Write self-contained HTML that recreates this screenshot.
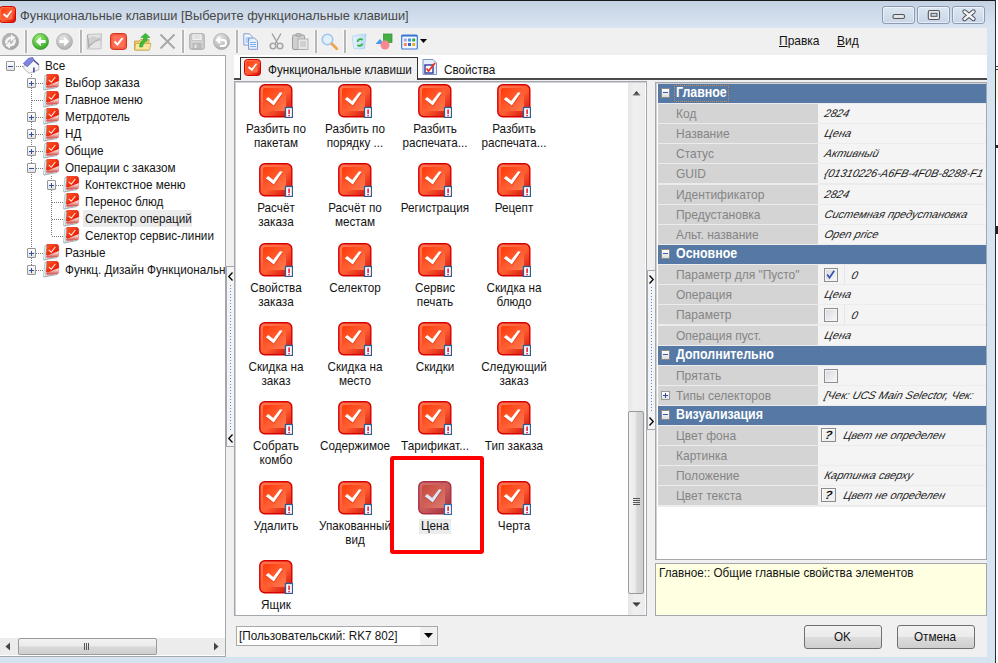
<!DOCTYPE html>
<html><head><meta charset="utf-8">
<style>
*{margin:0;padding:0;box-sizing:border-box}
html,body{width:998px;height:663px;overflow:hidden;background:#fff;font-family:"Liberation Sans",sans-serif;font-size:11.7px;color:#141414}
.a{position:absolute}
.t{position:absolute;white-space:nowrap;line-height:14px}
svg{position:absolute;overflow:visible}
</style></head><body>
<svg width="0" height="0" style="position:absolute">
<defs>
<linearGradient id="gOut" x1="0" y1="0" x2="1" y2="1"><stop offset="0" stop-color="#ff7a55"/><stop offset="0.55" stop-color="#ff5a30"/><stop offset="1" stop-color="#c80808"/></linearGradient>
<linearGradient id="gIn" x1="0" y1="0" x2="1" y2="1"><stop offset="0" stop-color="#ff3a0a"/><stop offset="1" stop-color="#ff7a50"/></linearGradient>
<symbol id="ic32" viewBox="0 0 34 34">
<rect x="0.8" y="0.8" width="32" height="32" rx="5" fill="url(#gOut)" stroke="#d40000" stroke-width="1.4"/>
<rect x="4" y="4" width="23" height="23" rx="2" fill="url(#gIn)"/>
<path d="M6.8 15.2 L9.2 13 L14.2 17 L21 8.2 L23.6 8.8 L14.8 21.6 Z" fill="#a01800" fill-opacity="0.35" transform="translate(0.2,1.2)"/>
<path d="M6.8 15.2 L9.2 13 L14.2 17 L21 8.2 L23.6 8.8 L14.8 21.6 Z" fill="#fff"/>
<rect x="26.5" y="23.5" width="7" height="10" fill="#fff" stroke="#2f5e94" stroke-width="1.3"/>
<rect x="29.3" y="25.5" width="1.6" height="4.6" fill="#e8203a"/>
<rect x="29.3" y="31" width="1.6" height="1.3" fill="#e8203a"/>
</symbol>
<symbol id="tic" viewBox="0 0 17 17">
<linearGradient id="gTr" x1="0" y1="0" x2="1" y2="1"><stop offset="0" stop-color="#ff5a28"/><stop offset="0.6" stop-color="#f22a08"/><stop offset="1" stop-color="#d00000"/></linearGradient>
<linearGradient id="gTb" x1="0" y1="0" x2="0" y2="1"><stop offset="0" stop-color="#fbf2f2"/><stop offset="0.35" stop-color="#f0b8b4"/><stop offset="0.7" stop-color="#d85a58"/><stop offset="1" stop-color="#e8d8d8"/></linearGradient>
<rect x="2.6" y="0.2" width="13" height="11.5" rx="3" fill="url(#gTr)" stroke="#d40000" stroke-width="0.6"/>
<path d="M5.7 5.9 L8.3 8.2 L12.3 3" fill="none" stroke="#fff" stroke-opacity="0.85" stroke-width="1.2"/>
<path d="M2.8 12.2 L15.8 7 L15.8 12.4 L4 15.2 Z" fill="url(#gTb)"/>
<path d="M1 16 L14.5 13.4" stroke="#9fb2b6" stroke-width="1"/>
<path d="M0.4 15.8 L1.9 1.8 L3.6 1.4 L2.4 15.6 Z" fill="#e2f8fc" stroke="#93a8ac" stroke-width="0.6"/>
</symbol>
<linearGradient id="gOutS" x1="0" y1="0" x2="1" y2="1"><stop offset="0" stop-color="#d27070"/><stop offset="0.55" stop-color="#c85858"/><stop offset="1" stop-color="#a02838"/></linearGradient>
<linearGradient id="gInS" x1="0" y1="0" x2="1" y2="1"><stop offset="0" stop-color="#c84838"/><stop offset="1" stop-color="#da7a70"/></linearGradient>
<symbol id="ic32s" viewBox="0 0 34 34">
<rect x="0.8" y="0.8" width="32" height="32" rx="5" fill="url(#gOutS)" stroke="#a83040" stroke-width="1.4"/>
<rect x="4" y="4" width="23" height="23" rx="2" fill="url(#gInS)"/>
<path d="M6.8 15.2 L9.2 13 L14.2 17 L21 8.2 L23.6 8.8 L14.8 21.6 Z" fill="#803040" fill-opacity="0.35" transform="translate(0.2,1.2)"/>
<path d="M6.8 15.2 L9.2 13 L14.2 17 L21 8.2 L23.6 8.8 L14.8 21.6 Z" fill="#dde8fa"/>
<rect x="26.5" y="23.5" width="7" height="10" fill="#fff" stroke="#2f6ab0" stroke-width="1.3"/>
<rect x="29.3" y="25.5" width="1.6" height="4.6" fill="#e8203a"/>
<rect x="29.3" y="31" width="1.6" height="1.3" fill="#e8203a"/>
</symbol>
<symbol id="ic32nb" viewBox="0 0 34 34">
<rect x="1" y="1" width="32" height="32" rx="6" fill="url(#gOut)" stroke="#d40000" stroke-width="2"/>
<rect x="4.5" y="4.5" width="22.5" height="22.5" rx="3" fill="url(#gIn)"/>
<path d="M7.5 17.5 L10.5 14.5 L15.5 19 L23.5 9 L26.5 10.2 L16.2 24.5 Z" fill="#a01800" fill-opacity="0.35" transform="translate(0.2,1.2)"/>
<path d="M7.5 17.5 L10.5 14.5 L15.5 19 L23.5 9 L26.5 10.2 L16.2 24.5 Z" fill="#fff"/>
</symbol>
</defs>
</svg>

<!-- top black line -->
<div class="a" style="left:0;top:0;width:998px;height:1px;background:#1a1a1a"></div>
<!-- window frame -->
<div class="a" style="left:0;top:1px;width:995px;height:662px;background:#d6e3f1"></div>
<div class="a" style="left:0;top:1px;width:995px;height:27px;background:linear-gradient(#c3d2e3,#dae5f2)"></div>
<div class="a" style="left:995px;top:0;width:1px;height:663px;background:#2b2b2b"></div>
<div class="a" style="left:996px;top:0;width:2px;height:663px;background:#fff"></div>
<div class="a" style="left:996px;top:66px;width:2px;height:1px;background:#333"></div>
<div class="a" style="left:996px;top:69px;width:2px;height:31px;background:#fffbe0;border-top:1px solid #333"></div>
<div class="a" style="left:996px;top:145px;width:2px;height:3px;background:#222"></div>
<div class="a" style="left:996px;top:226px;width:2px;height:8px;background:#222"></div>

<!-- title icon -->
<svg class="a" style="left:-1px;top:6px" width="17" height="17"><use href="#ic32nb"/></svg>
<div class="t" style="left:20px;top:9px;font-size:12.8px;color:#484848">Функциональные клавиши [Выберите функциональные клавиши]</div>

<!-- caption buttons -->
<div class="a" style="left:882px;top:6px;width:33px;height:18px;border:1px solid #8b9bb5;border-radius:3px;box-shadow:inset 0 0 0 1px rgba(255,255,255,0.55);background:linear-gradient(#dde7f2,#c9d6e6)"></div>
<div class="a" style="left:917px;top:6px;width:33px;height:18px;border:1px solid #8b9bb5;border-radius:3px;box-shadow:inset 0 0 0 1px rgba(255,255,255,0.55);background:linear-gradient(#dde7f2,#c9d6e6)"></div>
<div class="a" style="left:952px;top:6px;width:33px;height:18px;border:1px solid #8b9bb5;border-radius:3px;box-shadow:inset 0 0 0 1px rgba(255,255,255,0.55);background:linear-gradient(#dde7f2,#c9d6e6)"></div>
<svg class="a" style="left:892px;top:13px" width="14" height="7" viewBox="0 0 14 7"><rect x="1" y="1.5" width="11.5" height="4" rx="1.5" fill="#e4e4e4" stroke="#505560" stroke-width="1.1"/></svg>
<svg class="a" style="left:927px;top:9px" width="14" height="12" viewBox="0 0 14 12"><rect x="1.3" y="1.5" width="11.2" height="9" rx="1.5" fill="#ececec" stroke="#505560" stroke-width="1.1"/><rect x="4" y="4.3" width="6" height="3" fill="#c8d4e4" stroke="#505560" stroke-width="1"/></svg>
<svg class="a" style="left:961px;top:9px" width="16" height="12" viewBox="0 0 16 12"><path d="M3.5 2.5 L12.5 10 M12.5 2.5 L3.5 10" stroke="#4a505c" stroke-width="4.4" stroke-linecap="round"/><path d="M3.5 2.5 L12.5 10 M12.5 2.5 L3.5 10" stroke="#f4f4f4" stroke-width="2.4" stroke-linecap="round"/></svg>

<!-- client area -->
<div class="a" style="left:0;top:28px;width:987px;height:629px;background:#f0f0f0"></div>

<!-- TOOLBAR placeholder -->

<!-- separators -->
<div class="a" style="left:25px;top:30px;width:2px;height:23px;background:#b6b6b6;box-shadow:1px 0 0 #fafafa,-1px 0 0 #fafafa"></div>
<div class="a" style="left:80px;top:30px;width:2px;height:23px;background:#b6b6b6;box-shadow:1px 0 0 #fafafa,-1px 0 0 #fafafa"></div>
<div class="a" style="left:182px;top:30px;width:2px;height:23px;background:#b6b6b6;box-shadow:1px 0 0 #fafafa,-1px 0 0 #fafafa"></div>
<div class="a" style="left:236px;top:30px;width:2px;height:23px;background:#b6b6b6;box-shadow:1px 0 0 #fafafa,-1px 0 0 #fafafa"></div>
<div class="a" style="left:315px;top:30px;width:2px;height:23px;background:#b6b6b6;box-shadow:1px 0 0 #fafafa,-1px 0 0 #fafafa"></div>
<div class="a" style="left:344px;top:30px;width:2px;height:23px;background:#b6b6b6;box-shadow:1px 0 0 #fafafa,-1px 0 0 #fafafa"></div>
<!-- refresh -->
<svg class="a" style="left:2px;top:33px" width="17" height="17" viewBox="0 0 17 17">
<defs><radialGradient id="gRf" cx="0.45" cy="0.4" r="0.7"><stop offset="0" stop-color="#c4c4c4"/><stop offset="1" stop-color="#9e9e9e"/></radialGradient></defs>
<circle cx="8.5" cy="8.5" r="8.2" fill="url(#gRf)" stroke="#a4a4a4" stroke-width="0.6"/>
<path d="M4.3 10.5 Q3.8 5.2 9.5 4.6" fill="none" stroke="#f6f6f6" stroke-width="2.4"/>
<path d="M9 1.3 L13.6 4.8 L9 8.6 Z" fill="#f6f6f6"/>
<path d="M12.7 6.5 Q13.2 11.8 7.5 12.4" fill="none" stroke="#f6f6f6" stroke-width="2.4"/>
<path d="M8 8.4 L3.4 12.2 L8 15.7 Z" fill="#f6f6f6"/>
</svg>
<!-- back green -->
<svg class="a" style="left:32px;top:33px" width="17" height="17" viewBox="0 0 17 17">
<defs><radialGradient id="gGr" cx="0.4" cy="0.3" r="0.8"><stop offset="0" stop-color="#9ef07a"/><stop offset="1" stop-color="#2a9a20"/></radialGradient>
<radialGradient id="gGy" cx="0.4" cy="0.3" r="0.8"><stop offset="0" stop-color="#e6e6e6"/><stop offset="1" stop-color="#a8a8a8"/></radialGradient></defs>
<circle cx="8.5" cy="8.5" r="8" fill="url(#gGr)" stroke="#3a9a30" stroke-width="0.7"/>
<path d="M3.8 8.5 L8.8 3.8 L8.8 6.9 L13.6 6.9 L13.6 10.1 L8.8 10.1 L8.8 13.2 Z" fill="#fff"/>
</svg>
<!-- forward gray -->
<svg class="a" style="left:56px;top:33px" width="17" height="17" viewBox="0 0 17 17">
<circle cx="8.5" cy="8.5" r="8" fill="url(#gGy)" stroke="#a4a7ac" stroke-width="0.7"/>
<path d="M13.2 8.5 L8.2 3.8 L8.2 6.9 L3.4 6.9 L3.4 10.1 L8.2 10.1 L8.2 13.2 Z" fill="#fff"/>
</svg>
<!-- gray picture -->
<svg class="a" style="left:86px;top:33px" width="17" height="17" viewBox="0 0 17 17">
<path d="M1.5 1.5 L15.5 0.8 L15 15.8 L1 16 Z" fill="#e4e4e4" stroke="#bdbdbd" stroke-width="0.9"/>
<path d="M2 6 Q6 2 10 4 T15 2 V9 Q10 6 6 11 T2 15 Z" fill="#cfcfcf"/>
<path d="M3 13 Q8 8 14 6" fill="none" stroke="#b0b0b0" stroke-width="1.2"/>
<path d="M1.5 2 L3 15" stroke="#a8a8a8" stroke-width="1.2"/>
</svg>
<!-- red check -->
<svg class="a" style="left:110px;top:33px" width="17" height="17" viewBox="0 0 17 17">
<rect x="0.5" y="0.5" width="16" height="16" rx="3" fill="#f45a40" stroke="#d83020"/>
<rect x="2.5" y="2.5" width="12" height="12" rx="1.5" fill="#ff7058"/>
<path d="M4.5 8.5 L7.5 11.5 L12.5 5" fill="none" stroke="#fff" stroke-width="2"/>
</svg>
<!-- folder green arrow -->
<svg class="a" style="left:134px;top:33px" width="18" height="18" viewBox="0 0 18 18">
<path d="M0.5 8 H5.5 L6.5 6.5 H15 V17 H0.5 Z" fill="#f0cc6a" stroke="#c09a40" stroke-width="0.8"/>
<path d="M1.5 10.5 H17 L15.5 17 H0.8 Z" fill="#fbe6a0" stroke="#c8a448" stroke-width="0.8"/>
<path d="M5.5 14 Q5.5 8.5 9.5 7 L9.5 4.5 L6.8 4.5 L11.5 0.3 L16 4.5 L13 4.5 L13 8 Q9 9 8.5 14 Z" fill="#3cba3a" stroke="#229a22" stroke-width="0.5"/>
</svg>
<!-- X -->
<svg class="a" style="left:159px;top:33px" width="17" height="17" viewBox="0 0 17 17">
<path d="M1.5 1.5 L15.5 15.5 M15.5 1.5 L1.5 15.5" stroke="#a6a6a6" stroke-width="1.8"/>
</svg>
<!-- floppy -->
<svg class="a" style="left:189px;top:33px" width="16" height="17" viewBox="0 0 16 17">
<rect x="0.8" y="0.8" width="14.4" height="15.4" rx="1.5" fill="#d2d2d2" stroke="#a4a4a4"/>
<rect x="3" y="1" width="10" height="6.5" fill="#f4f4f4" stroke="#b4b4b4" stroke-width="0.6"/>
<path d="M4.5 3 H11.5 M4.5 5 H11.5" stroke="#c4c4c4" stroke-width="0.8"/>
<rect x="4" y="10.5" width="8" height="5.5" fill="#bdbdbd" stroke="#a8a8a8" stroke-width="0.5"/>
<rect x="5.5" y="11.5" width="2" height="3.5" fill="#e8e8e8"/>
</svg>
<!-- undo gray -->
<svg class="a" style="left:213px;top:33px" width="17" height="17" viewBox="0 0 17 17">
<circle cx="8.5" cy="8.5" r="8" fill="url(#gGy)" stroke="#a4a7ac" stroke-width="0.7"/>
<path d="M5 7 H10 A3 3 0 0 1 10 13 H7" fill="none" stroke="#fff" stroke-width="2"/>
<path d="M7 4 L4 7 L7 10" fill="none" stroke="#fff" stroke-width="2"/>
</svg>
<!-- copy -->
<svg class="a" style="left:243px;top:33px" width="17" height="17" viewBox="0 0 17 17">
<path d="M0.8 0.8 H6.5 L9 3.3 V12 H0.8 Z" fill="#f0f6fe" stroke="#7c90d0" stroke-width="0.9"/>
<path d="M5.5 5 H11.5 L14.5 8 V16.3 H5.5 Z" fill="#e8f0fc" stroke="#7c90d0" stroke-width="0.9"/>
<path d="M2.5 5 H7 M2.5 7 H7 M2.5 9 H5" stroke="#60a0e8" stroke-width="0.8"/>
<path d="M7 9.5 H13 M7 11.5 H13 M7 13.5 H13" stroke="#60a0e8" stroke-width="0.8"/>
</svg>
<!-- scissors -->
<svg class="a" style="left:269px;top:33px" width="15" height="17" viewBox="0 0 15 17">
<path d="M3 0.5 L9 11 M12 0.5 L6 11" stroke="#9c9c9c" stroke-width="1.3"/>
<circle cx="4" cy="13" r="2.8" fill="none" stroke="#a6a6a6" stroke-width="1.6"/>
<circle cx="11" cy="13" r="2.8" fill="none" stroke="#a6a6a6" stroke-width="1.6"/>
</svg>
<!-- paste -->
<svg class="a" style="left:292px;top:33px" width="17" height="17" viewBox="0 0 17 17">
<rect x="0.5" y="2" width="12" height="14.5" rx="1.5" fill="#cfcfcf" stroke="#9c9c9c"/>
<rect x="4" y="0.5" width="5" height="3" rx="1" fill="#bbb" stroke="#999" stroke-width="0.6"/>
<rect x="6" y="6" width="10" height="10.5" fill="#e6e6e6" stroke="#a4a7ac" stroke-width="0.8"/>
<path d="M8 9 H14 M8 11 H14 M8 13 H14" stroke="#b0b0b0" stroke-width="0.8"/>
</svg>
<!-- magnifier -->
<svg class="a" style="left:321px;top:33px" width="17" height="17" viewBox="0 0 17 17">
<circle cx="6.5" cy="6.5" r="5.3" fill="#dff0fc" stroke="#9cc4ec" stroke-width="1.5"/>
<path d="M10.8 10.8 L15.8 15.8" stroke="#e8a850" stroke-width="2.8" stroke-linecap="round"/>
</svg>
<!-- bin -->
<svg class="a" style="left:351px;top:33px" width="16" height="17" viewBox="0 0 16 17">
<defs><linearGradient id="gBin" x1="0" y1="0" x2="1" y2="0"><stop offset="0" stop-color="#e8f4fc"/><stop offset="1" stop-color="#b8dcf4"/></linearGradient></defs>
<path d="M1 3.5 Q7 1.5 15 1 L13.5 15.5 Q8 16.5 3 15.5 Z" fill="url(#gBin)" stroke="#a8d0ec" stroke-width="0.7"/>
<path d="M6.5 9 A3 3 0 0 1 11.5 7 M11.5 10.5 A3 3 0 0 1 6.5 12" fill="none" stroke="#38b040" stroke-width="1.8"/>
</svg>
<!-- shapes -->
<svg class="a" style="left:375px;top:33px" width="18" height="17" viewBox="0 0 18 17">
<rect x="8.5" y="1" width="8.5" height="8.5" fill="#44b044" stroke="#2a902a" stroke-width="0.7"/>
<path d="M0.5 11 L5 6 L9.5 11 Z" fill="#4898e8"/>
<circle cx="10" cy="12" r="4.5" fill="#f88890"/>
</svg>
<!-- grid -->
<svg class="a" style="left:401px;top:34px" width="17" height="16" viewBox="0 0 17 16">
<rect x="0.7" y="1" width="15.6" height="14" rx="1" fill="#f6f9ff" stroke="#3a78d8" stroke-width="1.2"/>
<rect x="0.7" y="1" width="15.6" height="1.6" fill="#3a78d8"/>
<rect x="2.8" y="4.5" width="3" height="3" fill="#a8a8e0"/><rect x="7" y="4.5" width="3" height="3" fill="#3a98e8"/><rect x="11.2" y="4.5" width="3" height="3" fill="#38a838"/>
<rect x="2.8" y="9" width="3" height="3" fill="#f88858"/><rect x="7" y="9" width="3" height="3" fill="#4060c0"/><rect x="11.2" y="9" width="3" height="3" fill="#e0b030"/>
</svg>
<svg class="a" style="left:420px;top:39px" width="7" height="4" viewBox="0 0 7 4"><path d="M0 0 H7 L3.5 4 Z" fill="#000"/></svg>


<!-- menu -->
<div class="t" style="left:779px;top:34.00px;font-size:13.33px;transform:scaleX(0.9001);transform-origin:0 0"><u>П</u>равка</div>
<div class="t" style="left:837px;top:34.00px;font-size:13.33px;transform:scaleX(0.9001);transform-origin:0 0"><u>В</u>ид</div>

<!-- TREE -->
<div class="a" style="left:-1px;top:55px;width:227px;height:602px;border:1px solid #a4a7ac;background:#fff"></div>
<div class="a" style="left:0;top:56px;width:225px;height:582px;overflow:hidden"><div class="a" style="left:0;top:-56px;width:225px;height:700px"><div class="a" style="left:16px;top:66px;width:7px;height:1px;background:repeating-linear-gradient(90deg,#7a7a7a 0 1px,transparent 1px 2px)"></div>
<div class="a" style="left:31px;top:74px;width:1px;height:196px;background:repeating-linear-gradient(180deg,#7a7a7a 0 1px,transparent 1px 2px)"></div>
<div class="a" style="left:36px;top:83px;width:7px;height:1px;background:repeating-linear-gradient(90deg,#7a7a7a 0 1px,transparent 1px 2px)"></div>
<div class="a" style="left:32px;top:100px;width:11px;height:1px;background:repeating-linear-gradient(90deg,#7a7a7a 0 1px,transparent 1px 2px)"></div>
<div class="a" style="left:36px;top:117px;width:7px;height:1px;background:repeating-linear-gradient(90deg,#7a7a7a 0 1px,transparent 1px 2px)"></div>
<div class="a" style="left:36px;top:134px;width:7px;height:1px;background:repeating-linear-gradient(90deg,#7a7a7a 0 1px,transparent 1px 2px)"></div>
<div class="a" style="left:36px;top:151px;width:7px;height:1px;background:repeating-linear-gradient(90deg,#7a7a7a 0 1px,transparent 1px 2px)"></div>
<div class="a" style="left:36px;top:168px;width:7px;height:1px;background:repeating-linear-gradient(90deg,#7a7a7a 0 1px,transparent 1px 2px)"></div>
<div class="a" style="left:56px;top:185px;width:7px;height:1px;background:repeating-linear-gradient(90deg,#7a7a7a 0 1px,transparent 1px 2px)"></div>
<div class="a" style="left:52px;top:202px;width:11px;height:1px;background:repeating-linear-gradient(90deg,#7a7a7a 0 1px,transparent 1px 2px)"></div>
<div class="a" style="left:52px;top:219px;width:11px;height:1px;background:repeating-linear-gradient(90deg,#7a7a7a 0 1px,transparent 1px 2px)"></div>
<div class="a" style="left:52px;top:236px;width:11px;height:1px;background:repeating-linear-gradient(90deg,#7a7a7a 0 1px,transparent 1px 2px)"></div>
<div class="a" style="left:36px;top:253px;width:7px;height:1px;background:repeating-linear-gradient(90deg,#7a7a7a 0 1px,transparent 1px 2px)"></div>
<div class="a" style="left:36px;top:270px;width:7px;height:1px;background:repeating-linear-gradient(90deg,#7a7a7a 0 1px,transparent 1px 2px)"></div>
<div class="a" style="left:51px;top:176px;width:1px;height:60px;background:repeating-linear-gradient(180deg,#7a7a7a 0 1px,transparent 1px 2px)"></div><div class="a" style="left:6px;top:61px;width:9px;height:10px;border:1px solid #959595;border-radius:1px;background:linear-gradient(#fff,#e2e2e2)"></div>
<div class="a" style="left:8px;top:66px;width:5px;height:1px;background:#3050a8"></div>
<svg class="a" style="left:23px;top:57px" width="17" height="17" viewBox="0 0 17 17"><path d="M0.8 8.5 L0.8 11.5 L6 16.3 L15.8 12.8 L15.8 7.5 L10.5 3 Z" fill="#f6f6f6" stroke="#a8a8a8" stroke-width="0.8"/><path d="M10.5 3 L15.8 7.8" stroke="#3c4090" stroke-width="1.2"/><path d="M0.3 6.5 L5.5 1.2 L9.8 0.6 L11 3.2 L4.2 9.8 Z" fill="#7e84e0" stroke="#5a5eb0" stroke-width="0.7"/><rect x="10" y="10.5" width="1.8" height="5" fill="#5558a8"/></svg>
<div class="t" style="left:45px;top:58.50px;font-size:13.0px;transform:scaleX(0.9001);transform-origin:0 0">Все</div>
<div class="a" style="left:27px;top:78px;width:9px;height:10px;border:1px solid #959595;border-radius:1px;background:linear-gradient(#fff,#e2e2e2)"></div>
<div class="a" style="left:29px;top:83px;width:5px;height:1px;background:#3050a8"></div>
<div class="a" style="left:31px;top:81px;width:1px;height:5px;background:#3050a8"></div>
<svg class="a" style="left:43px;top:74px" width="17" height="17"><use href="#tic"/></svg>
<div class="t" style="left:65px;top:75.50px;font-size:13.0px;transform:scaleX(0.9001);transform-origin:0 0">Выбор заказа</div>
<svg class="a" style="left:43px;top:91px" width="17" height="17"><use href="#tic"/></svg>
<div class="t" style="left:65px;top:92.50px;font-size:13.0px;transform:scaleX(0.9001);transform-origin:0 0">Главное меню</div>
<div class="a" style="left:27px;top:112px;width:9px;height:10px;border:1px solid #959595;border-radius:1px;background:linear-gradient(#fff,#e2e2e2)"></div>
<div class="a" style="left:29px;top:117px;width:5px;height:1px;background:#3050a8"></div>
<div class="a" style="left:31px;top:115px;width:1px;height:5px;background:#3050a8"></div>
<svg class="a" style="left:43px;top:108px" width="17" height="17"><use href="#tic"/></svg>
<div class="t" style="left:65px;top:109.50px;font-size:13.0px;transform:scaleX(0.9001);transform-origin:0 0">Метрдотель</div>
<div class="a" style="left:27px;top:129px;width:9px;height:10px;border:1px solid #959595;border-radius:1px;background:linear-gradient(#fff,#e2e2e2)"></div>
<div class="a" style="left:29px;top:134px;width:5px;height:1px;background:#3050a8"></div>
<div class="a" style="left:31px;top:132px;width:1px;height:5px;background:#3050a8"></div>
<svg class="a" style="left:43px;top:125px" width="17" height="17"><use href="#tic"/></svg>
<div class="t" style="left:65px;top:126.50px;font-size:13.0px;transform:scaleX(0.9001);transform-origin:0 0">НД</div>
<div class="a" style="left:27px;top:146px;width:9px;height:10px;border:1px solid #959595;border-radius:1px;background:linear-gradient(#fff,#e2e2e2)"></div>
<div class="a" style="left:29px;top:151px;width:5px;height:1px;background:#3050a8"></div>
<div class="a" style="left:31px;top:149px;width:1px;height:5px;background:#3050a8"></div>
<svg class="a" style="left:43px;top:142px" width="17" height="17"><use href="#tic"/></svg>
<div class="t" style="left:65px;top:143.50px;font-size:13.0px;transform:scaleX(0.9001);transform-origin:0 0">Общие</div>
<div class="a" style="left:27px;top:163px;width:9px;height:10px;border:1px solid #959595;border-radius:1px;background:linear-gradient(#fff,#e2e2e2)"></div>
<div class="a" style="left:29px;top:168px;width:5px;height:1px;background:#3050a8"></div>
<svg class="a" style="left:43px;top:159px" width="17" height="17"><use href="#tic"/></svg>
<div class="t" style="left:65px;top:160.50px;font-size:13.0px;transform:scaleX(0.9001);transform-origin:0 0">Операции с заказом</div>
<div class="a" style="left:47px;top:180px;width:9px;height:10px;border:1px solid #959595;border-radius:1px;background:linear-gradient(#fff,#e2e2e2)"></div>
<div class="a" style="left:49px;top:185px;width:5px;height:1px;background:#3050a8"></div>
<div class="a" style="left:51px;top:183px;width:1px;height:5px;background:#3050a8"></div>
<svg class="a" style="left:63px;top:176px" width="17" height="17"><use href="#tic"/></svg>
<div class="t" style="left:85px;top:177.50px;font-size:13.0px;transform:scaleX(0.9001);transform-origin:0 0">Контекстное меню</div>
<svg class="a" style="left:63px;top:193px" width="17" height="17"><use href="#tic"/></svg>
<div class="t" style="left:85px;top:194.50px;font-size:13.0px;transform:scaleX(0.9001);transform-origin:0 0">Перенос блюд</div>
<div class="a" style="left:83px;top:210px;width:109px;height:17px;background:#ebebeb"></div>
<svg class="a" style="left:63px;top:210px" width="17" height="17"><use href="#tic"/></svg>
<div class="t" style="left:85px;top:211.50px;font-size:13.0px;transform:scaleX(0.9001);transform-origin:0 0">Селектор операций</div>
<svg class="a" style="left:63px;top:227px" width="17" height="17"><use href="#tic"/></svg>
<div class="t" style="left:85px;top:228.50px;font-size:13.0px;transform:scaleX(0.9001);transform-origin:0 0">Селектор сервис-линии</div>
<div class="a" style="left:27px;top:248px;width:9px;height:10px;border:1px solid #959595;border-radius:1px;background:linear-gradient(#fff,#e2e2e2)"></div>
<div class="a" style="left:29px;top:253px;width:5px;height:1px;background:#3050a8"></div>
<div class="a" style="left:31px;top:251px;width:1px;height:5px;background:#3050a8"></div>
<svg class="a" style="left:43px;top:244px" width="17" height="17"><use href="#tic"/></svg>
<div class="t" style="left:65px;top:245.50px;font-size:13.0px;transform:scaleX(0.9001);transform-origin:0 0">Разные</div>
<div class="a" style="left:27px;top:265px;width:9px;height:10px;border:1px solid #959595;border-radius:1px;background:linear-gradient(#fff,#e2e2e2)"></div>
<div class="a" style="left:29px;top:270px;width:5px;height:1px;background:#3050a8"></div>
<div class="a" style="left:31px;top:268px;width:1px;height:5px;background:#3050a8"></div>
<svg class="a" style="left:43px;top:261px" width="17" height="17"><use href="#tic"/></svg>
<div class="t" style="left:65px;top:262.50px;font-size:13.0px;transform:scaleX(0.9001);transform-origin:0 0">Функц. Дизайн Функциональные</div></div></div>

<!-- tree hscroll -->
<div class="a" style="left:0;top:638px;width:225px;height:17px;background:#ececec"></div>
<svg class="a" style="left:5px;top:642px" width="6" height="9" viewBox="0 0 6 9"><path d="M5 0.5 L0.5 4.5 L5 8.5 Z" fill="#444"/></svg>
<svg class="a" style="left:213px;top:642px" width="6" height="9" viewBox="0 0 6 9"><path d="M1 0.5 L5.5 4.5 L1 8.5 Z" fill="#444"/></svg>
<div class="a" style="left:18px;top:638px;width:139px;height:17px;border:1px solid #9a9a9a;border-radius:2px;background:linear-gradient(#f2f2f2 0,#ebebeb 45%,#d8d8d8 55%,#cfcfcf 100%)"></div>
<div class="a" style="left:84px;top:643px;width:1px;height:7px;background:#555"></div>
<div class="a" style="left:86px;top:643px;width:1px;height:7px;background:#555"></div>
<div class="a" style="left:88px;top:643px;width:1px;height:7px;background:#555"></div>

<!-- left splitter -->
<div class="a" style="left:226px;top:266px;width:9px;height:181px;border:1px solid #a4a7ac;background:#f4f4f4"></div>
<svg class="a" style="left:228px;top:272px" width="5" height="9" viewBox="0 0 5 9"><path d="M4.5 0.5 L0.8 4.5 L4.5 8.5" fill="none" stroke="#000" stroke-width="1.3"/></svg>
<svg class="a" style="left:228px;top:434px" width="5" height="9" viewBox="0 0 5 9"><path d="M4.5 0.5 L0.8 4.5 L4.5 8.5" fill="none" stroke="#000" stroke-width="1.3"/></svg>
<div class="a" style="left:230px;top:285px;width:1px;height:146px;background:repeating-linear-gradient(180deg,#3a8af0 0 1px,transparent 1px 3px)"></div>

<!-- tab strip -->
<div class="a" style="left:234px;top:55px;width:753px;height:25px;background:#fff"></div>
<div class="a" style="left:234px;top:78px;width:6px;height:2px;background:#4a4a4a"></div>
<div class="a" style="left:417px;top:78px;width:570px;height:2px;background:#4a4a4a"></div>
<div class="a" style="left:240px;top:57px;width:178px;height:23px;border:1px solid #333;border-bottom:none;background:#f0f0f0"></div>
<svg class="a" style="left:244px;top:59px" width="17" height="17"><use href="#ic32nb"/></svg>
<div class="t" style="left:268px;top:63.00px;font-size:13.0px;transform:scaleX(0.9001);transform-origin:0 0">Функциональные клавиши</div>
<svg class="a" style="left:422px;top:59px" width="15" height="16" viewBox="0 0 15 16">
<path d="M1 .5 H11 L14.5 4 V15.5 H1 Z" fill="#e6eefa" stroke="#7b8fc8"/>
<rect x="3" y="6" width="8" height="8" fill="#fff" stroke="#2a3a9a" stroke-width="1.4"/>
<path d="M4.5 9.5 L6.5 12 L13 4" fill="none" stroke="#f03020" stroke-width="1.8"/>
</svg>
<div class="t" style="left:444px;top:63.00px;font-size:13.0px;transform:scaleX(0.9001);transform-origin:0 0">Свойства</div>

<!-- icon panel -->
<div class="a" style="left:234px;top:81px;width:413px;height:535px;border:1px solid #a4a7ac;box-shadow:inset 1px 1px 0 #d0d2d6;background:#fff"></div>
<svg class="a" style="left:259px;top:84px" width="34" height="34"><use href="#ic32"/></svg>
<div class="t" style="left:235.5px;width:80px;text-align:center;top:122.00px;font-size:13.0px;transform:scaleX(0.9001);transform-origin:50% 0">Разбить по</div>
<div class="t" style="left:235.5px;width:80px;text-align:center;top:135.70px;font-size:13.0px;transform:scaleX(0.9001);transform-origin:50% 0">пакетам</div>
<svg class="a" style="left:338px;top:84px" width="34" height="34"><use href="#ic32"/></svg>
<div class="t" style="left:314.5px;width:80px;text-align:center;top:122.00px;font-size:13.0px;transform:scaleX(0.9001);transform-origin:50% 0">Разбить по</div>
<div class="t" style="left:314.5px;width:80px;text-align:center;top:135.70px;font-size:13.0px;transform:scaleX(0.9001);transform-origin:50% 0">порядку ...</div>
<svg class="a" style="left:418px;top:84px" width="34" height="34"><use href="#ic32"/></svg>
<div class="t" style="left:394.5px;width:80px;text-align:center;top:122.00px;font-size:13.0px;transform:scaleX(0.9001);transform-origin:50% 0">Разбить</div>
<div class="t" style="left:394.5px;width:80px;text-align:center;top:135.70px;font-size:13.0px;transform:scaleX(0.9001);transform-origin:50% 0">распечата...</div>
<svg class="a" style="left:497px;top:84px" width="34" height="34"><use href="#ic32"/></svg>
<div class="t" style="left:473.5px;width:80px;text-align:center;top:122.00px;font-size:13.0px;transform:scaleX(0.9001);transform-origin:50% 0">Разбить</div>
<div class="t" style="left:473.5px;width:80px;text-align:center;top:135.70px;font-size:13.0px;transform:scaleX(0.9001);transform-origin:50% 0">распечата...</div>
<svg class="a" style="left:259px;top:163px" width="34" height="34"><use href="#ic32"/></svg>
<div class="t" style="left:235.5px;width:80px;text-align:center;top:201.00px;font-size:13.0px;transform:scaleX(0.9001);transform-origin:50% 0">Расчёт</div>
<div class="t" style="left:235.5px;width:80px;text-align:center;top:214.70px;font-size:13.0px;transform:scaleX(0.9001);transform-origin:50% 0">заказа</div>
<svg class="a" style="left:338px;top:163px" width="34" height="34"><use href="#ic32"/></svg>
<div class="t" style="left:314.5px;width:80px;text-align:center;top:201.00px;font-size:13.0px;transform:scaleX(0.9001);transform-origin:50% 0">Расчёт по</div>
<div class="t" style="left:314.5px;width:80px;text-align:center;top:214.70px;font-size:13.0px;transform:scaleX(0.9001);transform-origin:50% 0">местам</div>
<svg class="a" style="left:418px;top:163px" width="34" height="34"><use href="#ic32"/></svg>
<div class="t" style="left:394.5px;width:80px;text-align:center;top:201.00px;font-size:13.0px;transform:scaleX(0.9001);transform-origin:50% 0">Регистрация</div>
<svg class="a" style="left:497px;top:163px" width="34" height="34"><use href="#ic32"/></svg>
<div class="t" style="left:473.5px;width:80px;text-align:center;top:201.00px;font-size:13.0px;transform:scaleX(0.9001);transform-origin:50% 0">Рецепт</div>
<svg class="a" style="left:259px;top:243px" width="34" height="34"><use href="#ic32"/></svg>
<div class="t" style="left:235.5px;width:80px;text-align:center;top:281.00px;font-size:13.0px;transform:scaleX(0.9001);transform-origin:50% 0">Свойства</div>
<div class="t" style="left:235.5px;width:80px;text-align:center;top:294.70px;font-size:13.0px;transform:scaleX(0.9001);transform-origin:50% 0">заказа</div>
<svg class="a" style="left:338px;top:243px" width="34" height="34"><use href="#ic32"/></svg>
<div class="t" style="left:314.5px;width:80px;text-align:center;top:281.00px;font-size:13.0px;transform:scaleX(0.9001);transform-origin:50% 0">Селектор</div>
<svg class="a" style="left:418px;top:243px" width="34" height="34"><use href="#ic32"/></svg>
<div class="t" style="left:394.5px;width:80px;text-align:center;top:281.00px;font-size:13.0px;transform:scaleX(0.9001);transform-origin:50% 0">Сервис</div>
<div class="t" style="left:394.5px;width:80px;text-align:center;top:294.70px;font-size:13.0px;transform:scaleX(0.9001);transform-origin:50% 0">печать</div>
<svg class="a" style="left:497px;top:243px" width="34" height="34"><use href="#ic32"/></svg>
<div class="t" style="left:473.5px;width:80px;text-align:center;top:281.00px;font-size:13.0px;transform:scaleX(0.9001);transform-origin:50% 0">Скидка на</div>
<div class="t" style="left:473.5px;width:80px;text-align:center;top:294.70px;font-size:13.0px;transform:scaleX(0.9001);transform-origin:50% 0">блюдо</div>
<svg class="a" style="left:259px;top:322px" width="34" height="34"><use href="#ic32"/></svg>
<div class="t" style="left:235.5px;width:80px;text-align:center;top:360.00px;font-size:13.0px;transform:scaleX(0.9001);transform-origin:50% 0">Скидка на</div>
<div class="t" style="left:235.5px;width:80px;text-align:center;top:373.70px;font-size:13.0px;transform:scaleX(0.9001);transform-origin:50% 0">заказ</div>
<svg class="a" style="left:338px;top:322px" width="34" height="34"><use href="#ic32"/></svg>
<div class="t" style="left:314.5px;width:80px;text-align:center;top:360.00px;font-size:13.0px;transform:scaleX(0.9001);transform-origin:50% 0">Скидка на</div>
<div class="t" style="left:314.5px;width:80px;text-align:center;top:373.70px;font-size:13.0px;transform:scaleX(0.9001);transform-origin:50% 0">место</div>
<svg class="a" style="left:418px;top:322px" width="34" height="34"><use href="#ic32"/></svg>
<div class="t" style="left:394.5px;width:80px;text-align:center;top:360.00px;font-size:13.0px;transform:scaleX(0.9001);transform-origin:50% 0">Скидки</div>
<svg class="a" style="left:497px;top:322px" width="34" height="34"><use href="#ic32"/></svg>
<div class="t" style="left:473.5px;width:80px;text-align:center;top:360.00px;font-size:13.0px;transform:scaleX(0.9001);transform-origin:50% 0">Следующий</div>
<div class="t" style="left:473.5px;width:80px;text-align:center;top:373.70px;font-size:13.0px;transform:scaleX(0.9001);transform-origin:50% 0">заказ</div>
<svg class="a" style="left:259px;top:401px" width="34" height="34"><use href="#ic32"/></svg>
<div class="t" style="left:235.5px;width:80px;text-align:center;top:439.00px;font-size:13.0px;transform:scaleX(0.9001);transform-origin:50% 0">Собрать</div>
<div class="t" style="left:235.5px;width:80px;text-align:center;top:452.70px;font-size:13.0px;transform:scaleX(0.9001);transform-origin:50% 0">комбо</div>
<svg class="a" style="left:338px;top:401px" width="34" height="34"><use href="#ic32"/></svg>
<div class="t" style="left:314.5px;width:80px;text-align:center;top:439.00px;font-size:13.0px;transform:scaleX(0.9001);transform-origin:50% 0">Содержимое</div>
<svg class="a" style="left:418px;top:401px" width="34" height="34"><use href="#ic32"/></svg>
<div class="t" style="left:394.5px;width:80px;text-align:center;top:439.00px;font-size:13.0px;transform:scaleX(0.9001);transform-origin:50% 0">Тарификат...</div>
<svg class="a" style="left:497px;top:401px" width="34" height="34"><use href="#ic32"/></svg>
<div class="t" style="left:473.5px;width:80px;text-align:center;top:439.00px;font-size:13.0px;transform:scaleX(0.9001);transform-origin:50% 0">Тип заказа</div>
<svg class="a" style="left:259px;top:481px" width="34" height="34"><use href="#ic32"/></svg>
<div class="t" style="left:235.5px;width:80px;text-align:center;top:519.00px;font-size:13.0px;transform:scaleX(0.9001);transform-origin:50% 0">Удалить</div>
<svg class="a" style="left:338px;top:481px" width="34" height="34"><use href="#ic32"/></svg>
<div class="t" style="left:314.5px;width:80px;text-align:center;top:519.00px;font-size:13.0px;transform:scaleX(0.9001);transform-origin:50% 0">Упакованный</div>
<div class="t" style="left:314.5px;width:80px;text-align:center;top:532.70px;font-size:13.0px;transform:scaleX(0.9001);transform-origin:50% 0">вид</div>
<svg class="a" style="left:418px;top:481px" width="34" height="34"><use href="#ic32s"/></svg>
<div class="a" style="left:419px;top:519px;width:32px;height:15px;background:#ececec"></div>
<div class="t" style="left:394.5px;width:80px;text-align:center;top:519.00px;font-size:13.0px;transform:scaleX(0.9001);transform-origin:50% 0">Цена</div>
<svg class="a" style="left:497px;top:481px" width="34" height="34"><use href="#ic32"/></svg>
<div class="t" style="left:473.5px;width:80px;text-align:center;top:519.00px;font-size:13.0px;transform:scaleX(0.9001);transform-origin:50% 0">Черта</div>
<svg class="a" style="left:259px;top:560px" width="34" height="34"><use href="#ic32"/></svg>
<div class="t" style="left:235.5px;width:80px;text-align:center;top:598.00px;font-size:13.0px;transform:scaleX(0.9001);transform-origin:50% 0">Ящик</div>
<!-- vscroll -->
<div class="a" style="left:628px;top:83px;width:17px;height:532px;background:linear-gradient(90deg,#e6e6e6,#f0f0f0 40%,#ececec)"></div>
<svg class="a" style="left:632px;top:90px" width="9" height="6" viewBox="0 0 9 6"><defs><linearGradient id="gAr" x1="0" y1="0" x2="0" y2="1"><stop offset="0" stop-color="#222"/><stop offset="1" stop-color="#777"/></linearGradient></defs><path d="M0.5 5.5 L4.5 1 L8.5 5.5 Z" fill="url(#gAr)"/></svg>
<svg class="a" style="left:632px;top:602px" width="9" height="6" viewBox="0 0 9 6"><path d="M0.5 0.5 L4.5 5 L8.5 0.5 Z" fill="url(#gAr)"/></svg>
<div class="a" style="left:628px;top:411px;width:16px;height:183px;border:1px solid #9a9a9a;border-radius:2px;background:linear-gradient(90deg,#f2f2f2 0,#ebebeb 45%,#d8d8d8 55%,#cfcfcf 100%)"></div>
<div class="a" style="left:633px;top:498px;width:7px;height:1px;background:#555"></div>
<div class="a" style="left:633px;top:500px;width:7px;height:1px;background:#555"></div>
<div class="a" style="left:633px;top:502px;width:7px;height:1px;background:#555"></div>
<div class="a" style="left:633px;top:504px;width:7px;height:1px;background:#555"></div>

<div class="a" style="left:390px;top:456px;width:94px;height:98px;border:4px solid #ff0000;border-radius:3px"></div>
<!-- right splitter -->
<div class="a" style="left:647px;top:270px;width:9px;height:160px;border:1px solid #a4a7ac;background:#f4f4f4"></div>
<svg class="a" style="left:649px;top:275px" width="5" height="9" viewBox="0 0 5 9"><path d="M0.5 0.5 L4.2 4.5 L0.5 8.5" fill="none" stroke="#000" stroke-width="1.3"/></svg>
<svg class="a" style="left:649px;top:417px" width="5" height="9" viewBox="0 0 5 9"><path d="M0.5 0.5 L4.2 4.5 L0.5 8.5" fill="none" stroke="#000" stroke-width="1.3"/></svg>
<div class="a" style="left:651px;top:287px;width:1px;height:125px;background:repeating-linear-gradient(180deg,#3a8af0 0 1px,transparent 1px 3px)"></div>

<!-- property grid -->
<div class="a" style="left:655px;top:82px;width:332px;height:478px;border:1px solid #a4a7ac;box-shadow:inset 1px 1px 0 #d0d2d6;background:#fff"></div>
<div class="a" style="left:658px;top:84px;width:328px;height:423px;background:#ececec"></div>
<div class="a" style="left:658px;top:84px;width:328px;height:19px;background:#5579a4"></div>
<div class="a" style="left:661px;top:88px;width:9px;height:10px;border:1px solid #8a8a8a;background:linear-gradient(#fff,#ddd)"></div>
<div class="a" style="left:663px;top:92px;width:5px;height:1px;background:#3a58b0"></div>
<div class="t" style="left:676px;top:86.00px;font-size:13.78px;font-weight:bold;color:#fff;transform:scaleX(0.9001);transform-origin:0 0">Главное</div>
<div class="a" style="left:674px;top:85px;width:55px;height:17px;border:1px dotted #c89050"></div>
<div class="a" style="left:658px;top:104px;width:160px;height:19px;background:#d4d4d4"></div>
<div class="a" style="left:818px;top:104px;width:168px;height:19px;background:#f4f4f4"></div>
<div class="t" style="left:676px;top:107.00px;font-size:13.33px;color:#858585;transform:scaleX(0.9001);transform-origin:0 0">Код</div>
<div class="t" style="left:823px;top:106px;font-size:11px;font-style:italic;transform:skewX(-15deg);transform-origin:0 100%;color:#1a1a1a">2824</div>
<div class="a" style="left:658px;top:124px;width:160px;height:19px;background:#d4d4d4"></div>
<div class="a" style="left:818px;top:124px;width:168px;height:19px;background:#f4f4f4"></div>
<div class="t" style="left:676px;top:127.00px;font-size:13.33px;color:#858585;transform:scaleX(0.9001);transform-origin:0 0">Название</div>
<div class="t" style="left:823px;top:126px;font-size:11px;font-style:italic;transform:skewX(-15deg);transform-origin:0 100%;color:#1a1a1a">Цена</div>
<div class="a" style="left:658px;top:144px;width:160px;height:19px;background:#d4d4d4"></div>
<div class="a" style="left:818px;top:144px;width:168px;height:19px;background:#f4f4f4"></div>
<div class="t" style="left:676px;top:147.00px;font-size:13.33px;color:#858585;transform:scaleX(0.9001);transform-origin:0 0">Статус</div>
<div class="t" style="left:823px;top:146px;font-size:11px;font-style:italic;transform:skewX(-15deg);transform-origin:0 100%;color:#1a1a1a">Активный</div>
<div class="a" style="left:658px;top:164px;width:160px;height:19px;background:#d4d4d4"></div>
<div class="a" style="left:818px;top:164px;width:168px;height:19px;background:#f4f4f4"></div>
<div class="t" style="left:676px;top:167.00px;font-size:13.33px;color:#858585;transform:scaleX(0.9001);transform-origin:0 0">GUID</div>
<div class="t" style="left:823px;top:166px;font-size:11px;font-style:italic;transform:skewX(-15deg);transform-origin:0 100%;color:#1a1a1a">{01310226-A6FB-4F0B-8288-F1</div>
<div class="a" style="left:658px;top:185px;width:160px;height:19px;background:#d4d4d4"></div>
<div class="a" style="left:818px;top:185px;width:168px;height:19px;background:#f4f4f4"></div>
<div class="t" style="left:676px;top:188.00px;font-size:13.33px;color:#858585;transform:scaleX(0.9001);transform-origin:0 0">Идентификатор</div>
<div class="t" style="left:823px;top:187px;font-size:11px;font-style:italic;transform:skewX(-15deg);transform-origin:0 100%;color:#1a1a1a">2824</div>
<div class="a" style="left:658px;top:205px;width:160px;height:19px;background:#d4d4d4"></div>
<div class="a" style="left:818px;top:205px;width:168px;height:19px;background:#f4f4f4"></div>
<div class="t" style="left:676px;top:208.00px;font-size:13.33px;color:#858585;transform:scaleX(0.9001);transform-origin:0 0">Предустановка</div>
<div class="t" style="left:823px;top:207px;font-size:11px;font-style:italic;transform:skewX(-15deg);transform-origin:0 100%;color:#1a1a1a">Системная предустановка</div>
<div class="a" style="left:658px;top:225px;width:160px;height:19px;background:#d4d4d4"></div>
<div class="a" style="left:818px;top:225px;width:168px;height:19px;background:#f4f4f4"></div>
<div class="t" style="left:676px;top:228.00px;font-size:13.33px;color:#858585;transform:scaleX(0.9001);transform-origin:0 0">Альт. название</div>
<div class="t" style="left:823px;top:227px;font-size:11px;font-style:italic;transform:skewX(-15deg);transform-origin:0 100%;color:#1a1a1a">Open price</div>
<div class="a" style="left:658px;top:245px;width:328px;height:19px;background:#5579a4"></div>
<div class="a" style="left:661px;top:249px;width:9px;height:10px;border:1px solid #8a8a8a;background:linear-gradient(#fff,#ddd)"></div>
<div class="a" style="left:663px;top:253px;width:5px;height:1px;background:#3a58b0"></div>
<div class="t" style="left:676px;top:247.00px;font-size:13.78px;font-weight:bold;color:#fff;transform:scaleX(0.9001);transform-origin:0 0">Основное</div>
<div class="a" style="left:658px;top:265px;width:160px;height:19px;background:#d4d4d4"></div>
<div class="a" style="left:818px;top:265px;width:168px;height:19px;background:#f4f4f4"></div>
<div class="t" style="left:676px;top:268.00px;font-size:13.33px;color:#858585;transform:scaleX(0.9001);transform-origin:0 0">Параметр для "Пусто"</div>
<div class="a" style="left:824px;top:268px;width:14px;height:14px;border:1px solid #8f8f8f;box-shadow:inset 0 0 0 1px #f4f4f4;background:linear-gradient(135deg,#d4d8e0,#fafafa)"></div>
<div class="a" style="left:844px;top:265px;width:1px;height:19px;background:#e6e6e6"></div>
<svg class="a" style="left:826px;top:270px" width="9" height="9" viewBox="0 0 9 9"><path d="M1.2 4.5 L3.5 7.8 L8.2 0.8" fill="none" stroke="#3a50b0" stroke-width="1.7"/></svg>
<div class="t" style="left:850px;top:268px;font-size:11px;font-style:italic;transform:skewX(-15deg);transform-origin:0 100%;color:#1a1a1a">0</div>
<div class="a" style="left:658px;top:285px;width:160px;height:19px;background:#d4d4d4"></div>
<div class="a" style="left:818px;top:285px;width:168px;height:19px;background:#f4f4f4"></div>
<div class="t" style="left:676px;top:288.00px;font-size:13.33px;color:#858585;transform:scaleX(0.9001);transform-origin:0 0">Операция</div>
<div class="t" style="left:823px;top:287px;font-size:11px;font-style:italic;transform:skewX(-15deg);transform-origin:0 100%;color:#1a1a1a">Цена</div>
<div class="a" style="left:658px;top:305px;width:160px;height:19px;background:#d4d4d4"></div>
<div class="a" style="left:818px;top:305px;width:168px;height:19px;background:#f4f4f4"></div>
<div class="t" style="left:676px;top:308.00px;font-size:13.33px;color:#858585;transform:scaleX(0.9001);transform-origin:0 0">Параметр</div>
<div class="a" style="left:824px;top:308px;width:14px;height:14px;border:1px solid #8f8f8f;box-shadow:inset 0 0 0 1px #f4f4f4;background:linear-gradient(135deg,#d4d8e0,#fafafa)"></div>
<div class="a" style="left:844px;top:305px;width:1px;height:19px;background:#e6e6e6"></div>
<div class="t" style="left:850px;top:308px;font-size:11px;font-style:italic;transform:skewX(-15deg);transform-origin:0 100%;color:#1a1a1a">0</div>
<div class="a" style="left:658px;top:326px;width:160px;height:19px;background:#d4d4d4"></div>
<div class="a" style="left:818px;top:326px;width:168px;height:19px;background:#f4f4f4"></div>
<div class="t" style="left:676px;top:329.00px;font-size:13.33px;color:#858585;transform:scaleX(0.9001);transform-origin:0 0">Операция пуст.</div>
<div class="t" style="left:823px;top:328px;font-size:11px;font-style:italic;transform:skewX(-15deg);transform-origin:0 100%;color:#1a1a1a">Цена</div>
<div class="a" style="left:658px;top:346px;width:328px;height:19px;background:#5579a4"></div>
<div class="a" style="left:661px;top:350px;width:9px;height:10px;border:1px solid #8a8a8a;background:linear-gradient(#fff,#ddd)"></div>
<div class="a" style="left:663px;top:354px;width:5px;height:1px;background:#3a58b0"></div>
<div class="t" style="left:676px;top:348.00px;font-size:13.78px;font-weight:bold;color:#fff;transform:scaleX(0.9001);transform-origin:0 0">Дополнительно</div>
<div class="a" style="left:658px;top:366px;width:160px;height:19px;background:#d4d4d4"></div>
<div class="a" style="left:818px;top:366px;width:168px;height:19px;background:#f4f4f4"></div>
<div class="t" style="left:676px;top:369.00px;font-size:13.33px;color:#858585;transform:scaleX(0.9001);transform-origin:0 0">Прятать</div>
<div class="a" style="left:824px;top:369px;width:14px;height:14px;border:1px solid #8f8f8f;box-shadow:inset 0 0 0 1px #f4f4f4;background:linear-gradient(135deg,#d4d8e0,#fafafa)"></div>
<div class="a" style="left:658px;top:386px;width:160px;height:19px;background:#d4d4d4"></div>
<div class="a" style="left:818px;top:386px;width:168px;height:19px;background:#f4f4f4"></div>
<div class="t" style="left:676px;top:389.00px;font-size:13.33px;color:#858585;transform:scaleX(0.9001);transform-origin:0 0">Типы селекторов</div>
<div class="a" style="left:661px;top:391px;width:9px;height:9px;border:1px solid #9a9a9a;background:linear-gradient(#fff,#e4e4e4)"></div>
<div class="a" style="left:663px;top:395px;width:5px;height:1px;background:#2a4a9a"></div>
<div class="a" style="left:665px;top:393px;width:1px;height:5px;background:#2a4a9a"></div>
<div class="t" style="left:823px;top:388px;font-size:11px;font-style:italic;transform:skewX(-15deg);transform-origin:0 100%;color:#1a1a1a">[Чек: UCS Main Selector, Чек:</div>
<div class="a" style="left:658px;top:406px;width:328px;height:19px;background:#5579a4"></div>
<div class="a" style="left:661px;top:410px;width:9px;height:10px;border:1px solid #8a8a8a;background:linear-gradient(#fff,#ddd)"></div>
<div class="a" style="left:663px;top:414px;width:5px;height:1px;background:#3a58b0"></div>
<div class="t" style="left:676px;top:408.00px;font-size:13.78px;font-weight:bold;color:#fff;transform:scaleX(0.9001);transform-origin:0 0">Визуализация</div>
<div class="a" style="left:658px;top:426px;width:160px;height:19px;background:#d4d4d4"></div>
<div class="a" style="left:818px;top:426px;width:168px;height:19px;background:#f4f4f4"></div>
<div class="t" style="left:676px;top:429.00px;font-size:13.33px;color:#858585;transform:scaleX(0.9001);transform-origin:0 0">Цвет фона</div>
<div class="a" style="left:821px;top:428px;width:15px;height:14px;border:1px solid #8a8a8a;box-shadow:inset 1px 1px 0 #fff;background:#f0f0f0"></div>
<div class="t" style="left:825px;top:428px;font-size:12px;font-style:italic;font-weight:bold;transform:skewX(-10deg)">?</div>
<div class="t" style="left:842px;top:428px;font-size:11px;font-style:italic;transform:skewX(-15deg);transform-origin:0 100%;color:#1a1a1a">Цвет не определен</div>
<div class="a" style="left:658px;top:446px;width:160px;height:19px;background:#d4d4d4"></div>
<div class="a" style="left:818px;top:446px;width:168px;height:19px;background:#f4f4f4"></div>
<div class="t" style="left:676px;top:449.00px;font-size:13.33px;color:#858585;transform:scaleX(0.9001);transform-origin:0 0">Картинка</div>
<div class="t" style="left:823px;top:448px;font-size:11px;font-style:italic;transform:skewX(-15deg);transform-origin:0 100%;color:#1a1a1a"></div>
<div class="a" style="left:658px;top:466px;width:160px;height:19px;background:#d4d4d4"></div>
<div class="a" style="left:818px;top:466px;width:168px;height:19px;background:#f4f4f4"></div>
<div class="t" style="left:676px;top:469.00px;font-size:13.33px;color:#858585;transform:scaleX(0.9001);transform-origin:0 0">Положение</div>
<div class="t" style="left:823px;top:468px;font-size:11px;font-style:italic;transform:skewX(-15deg);transform-origin:0 100%;color:#1a1a1a">Картинка сверху</div>
<div class="a" style="left:658px;top:486px;width:160px;height:19px;background:#d4d4d4"></div>
<div class="a" style="left:818px;top:486px;width:168px;height:19px;background:#f4f4f4"></div>
<div class="t" style="left:676px;top:489.00px;font-size:13.33px;color:#858585;transform:scaleX(0.9001);transform-origin:0 0">Цвет текста</div>
<div class="a" style="left:821px;top:488px;width:15px;height:14px;border:1px solid #8a8a8a;box-shadow:inset 1px 1px 0 #fff;background:#f0f0f0"></div>
<div class="t" style="left:825px;top:488px;font-size:12px;font-style:italic;font-weight:bold;transform:skewX(-10deg)">?</div>
<div class="t" style="left:842px;top:488px;font-size:11px;font-style:italic;transform:skewX(-15deg);transform-origin:0 100%;color:#1a1a1a">Цвет не определен</div>

<!-- description -->
<div class="a" style="left:655px;top:563px;width:332px;height:53px;border:1px solid #a4a7ac;background:#ffffe1"></div>
<div class="t" style="left:659px;top:566.00px;font-size:13.0px;transform:scaleX(0.9001);transform-origin:0 0">Главное:: Общие главные свойства элементов</div>

<!-- combo -->
<div class="a" style="left:236px;top:626px;width:202px;height:20px;border:1px solid #a8a8a8;background:#fff"></div>
<div class="t" style="left:239px;top:629.00px;font-size:13.0px;transform:scaleX(0.9001);transform-origin:0 0">[Пользовательский: RK7 802]</div>
<div class="a" style="left:420px;top:627px;width:17px;height:18px;background:#f0f0f0"></div>
<svg class="a" style="left:424px;top:633px" width="9" height="5" viewBox="0 0 9 5"><path d="M0 0 H9 L4.5 5 Z" fill="#000"/></svg>

<!-- buttons -->
<div class="a" style="left:804px;top:625px;width:78px;height:24px;border:1px solid #707070;border-radius:3px;background:linear-gradient(#f2f2f2 0,#ebebeb 50%,#dddddd 50%,#cfcfcf 100%)"></div>
<div class="t" style="left:834px;top:630.00px;font-size:13.0px;transform:scaleX(0.9001);transform-origin:0 0">OK</div>
<div class="a" style="left:897px;top:625px;width:78px;height:24px;border:1px solid #707070;border-radius:3px;background:linear-gradient(#f2f2f2 0,#ebebeb 50%,#dddddd 50%,#cfcfcf 100%)"></div>
<div class="t" style="left:914px;top:630.00px;font-size:13.0px;transform:scaleX(0.9001);transform-origin:0 0">Отмена</div>

</body></html>
